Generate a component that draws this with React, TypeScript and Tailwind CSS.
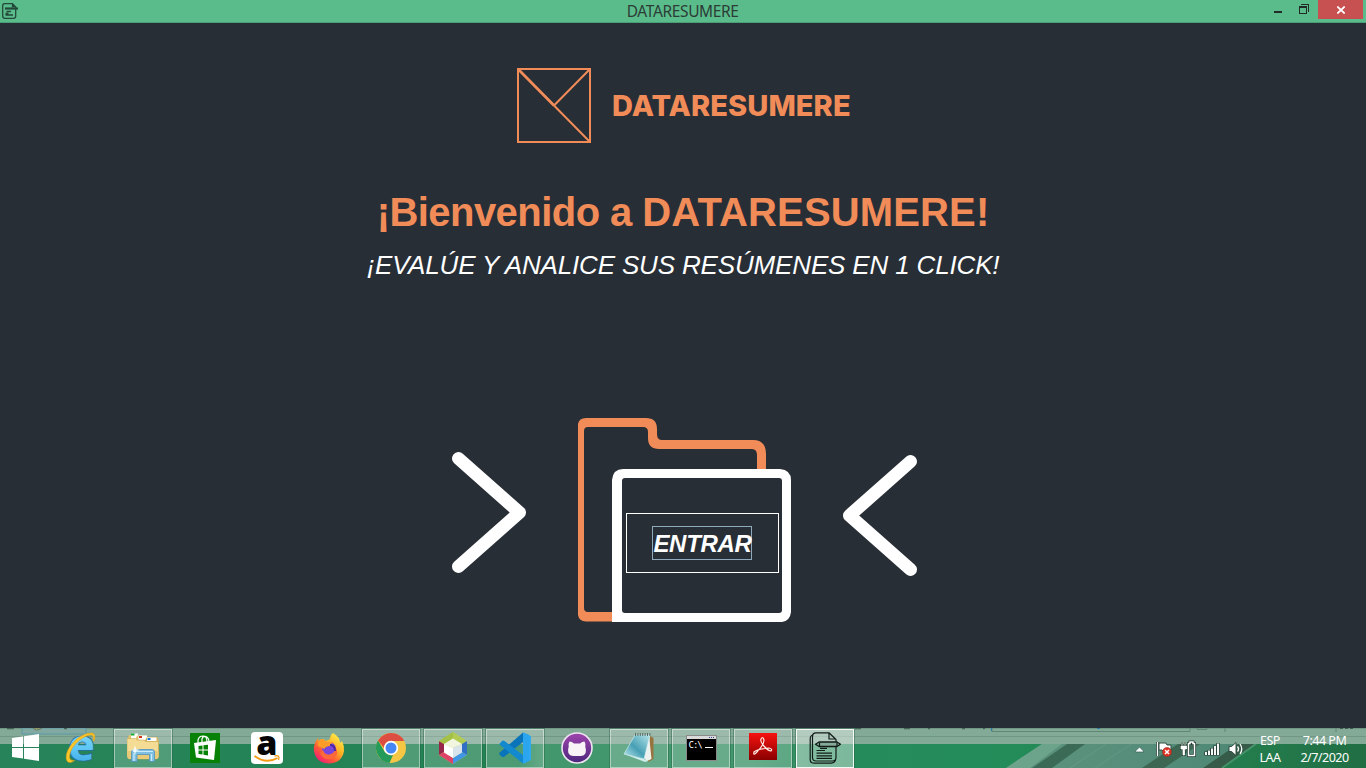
import type { ReactNode } from "react";

function NoteGlyph({ className }: { className: string }) {
  return (
    <svg className={className} viewBox="0 0 32 32" fill="none" stroke="#101a16" strokeWidth="1.2" strokeLinejoin="round">
      <path d="M4 3Q1.200 3.500 1.200 7V27.500Q1.200 31.200 5 31.200H22Q25.500 31 26.500 28" />
      <path d="M20 .8H7Q3.500.8 3.500 4.500V25.500Q3.500 29 7 29H23.500Q27 29 27 25.500V7.500L20 .8V7H26.500" />
      <path d="M6.500 12.200L10 10H28L31.500 12.200L28 14.500H10Z" fill="#86aa99" strokeWidth="1.300" />
      <path d="M10.500 10.500V14M28 10.500V14M11 16.300H18M7.500 18.500H16M7.500 21.200H23M7.500 23.800H23M7.500 26.400H23" strokeWidth="1.200" />
    </svg>
  );
}

function TitleGlyph() {
  return (
    <svg className="size-4" viewBox="0 0 16 16" fill="none" stroke="#23483a" strokeWidth="1.300">
      <path d="M10.500.7H2.500Q.7.7.7 3V13Q.7 15.300 3 15.300H11.500Q13.700 15.300 13.700 13V4L10.500.7V3.500H13.500" />
      <path d="M3 5.500H16" strokeWidth="2.200" />
      <path d="M4.500 8.500H9M3.500 10.500H6.500M3.500 12H11" strokeWidth="1.500" />
    </svg>
  );
}

function Icon({ children }: { children: ReactNode }) {
  return (
    <svg className="size-8" viewBox="0 0 32 32">
      {children}
    </svg>
  );
}

function Explorer() {
  return (
    <Icon>
      <path d="M1 6L2 3H9L10 6H14V26H2Q0 25 0 22Z" fill="#dfc06a" />
      <path d="M4 1.500H11V8H4Z" fill="#fff" />
      <path d="M4 1.500H7.500V3.500H4Z" fill="#12a82c" />
      <path d="M9 6L10 3.500H20L21 8V26H9Z" fill="#e3c671" />
      <path d="M11.500 3.500H20V8H11.500Z" fill="#fff" />
      <path d="M12 4H15V6H12Z" fill="#d9301c" />
      <path d="M18 8L20 5H30L31.500 7V24Q31 27 28 27H19Z" fill="#d8b75c" />
      <path d="M20 5.500H29.500V9H20Z" fill="#fff" />
      <path d="M20.500 6H23.500V8H20.500Z" fill="#1878d8" />
      <path d="M0 6.500H8.500L10.500 8H16.500L19 9.500H31.500V25Q31 27 29 27H2Q0 26 0 23Z" fill="#f4dc94" stroke="#c9a750" strokeWidth=".6" />
      <path d="M0 19H31.500V25Q31 27 29 27H2Q0 26 0 19Z" fill="#e9ca78" />
      <path d="M4.500 29.500V20Q4.500 17.500 7 17.500H25Q27.500 17.500 27.500 20V29.500H22.500V22.500H10V29.500Z" fill="#7fbfe2" stroke="#4f93bb" strokeWidth=".8" />
      <path d="M6 19.500H26M7 21V29M24.500 22V29" stroke="#c9ebfa" strokeWidth="1.200" />
      <path d="M8 13L9 17L13 18L9 19L8 23L7 19L4 18L7 17Z" fill="#fff" opacity=".9" />
    </Icon>
  );
}

function InternetExplorer() {
  return (
    <Icon>
      <defs>
        <linearGradient id="ie" x1="0" y1="0" x2="0" y2="1">
          <stop offset="0.2" stopColor="#8cdefb" />
          <stop offset=".6" stopColor="#5cc5f5" />
          <stop offset="1" stopColor="#2b97db" />
        </linearGradient>
      </defs>
      <text x="16.500" y="29" textAnchor="middle" className="font-['Open_Sans',sans-serif] text-[44px] font-extrabold" fill="url(#ie)" stroke="#22679a" strokeWidth=".7">
        e
      </text>
      <path
        d="M29 9Q31.500 2 27 1Q21 .5 13 6Q4 13 1.500 22Q0 31 5.500 30.500Q7.500 30 9.500 28.500Q4.500 29 4.500 24.500Q5 16 14 8.500Q22 2.500 26.500 3Q29 3.500 28 9Z"
        fill="#f9c62b"
        stroke="#dd9d12"
        strokeWidth=".6"
      />
    </Icon>
  );
}

function Store() {
  return (
    <Icon>
      <path d="M1 1H31V31H1Z" fill="#078207" />
      <path d="M9 12V8Q10 4 14 4Q18 4 18 10M13 11V7Q14 3.500 17 4.500Q20 6 20 10" fill="none" stroke="#fff" strokeWidth="1.200" />
      <path d="M5 11L27 8L25 28L7 25.500Z" fill="#fff" />
      <path d="M9.500 14L13.500 13.500V17.500H9.500ZM14.500 13.300L19 12.700V17.500H14.500ZM9.500 18.500H13.500V22.500L9.500 22ZM14.500 18.500H19V23.500L14.500 22.700Z" fill="#078207" />
    </Icon>
  );
}

function Amazon() {
  return (
    <Icon>
      <rect width="32" height="32" rx="4" fill="#fff" />
      <text x="15.800" y="22.500" textAnchor="middle" className="font-['Open_Sans',sans-serif] text-[34px] font-extrabold" fill="#050505">
        a
      </text>
      <path d="M3.500 24Q15 32.500 26.500 26" fill="none" stroke="#f59b13" strokeWidth="2" />
      <path d="M23.500 24Q29.500 22.500 27.500 28" fill="none" stroke="#f59b13" strokeWidth="1.300" />
    </Icon>
  );
}

function Firefox() {
  return (
    <Icon>
      <defs>
        <linearGradient id="fox" x1=".9" y1=".1" x2=".2" y2="1">
          <stop offset="0" stopColor="#fff04a" />
          <stop offset=".4" stopColor="#ffae24" />
          <stop offset=".7" stopColor="#ff543a" />
          <stop offset="1" stopColor="#ed1682" />
        </linearGradient>
      </defs>
      <path d="M20 1Q27 5 27 11L29 9Q31.500 14 31 19Q29 31 16 31.500Q3 31 1 19Q0 12 5 6L6 10Q8 7 11 7L12 9Q16 8 17 7Q17 3 20 1Z" fill="url(#fox)" />
      <circle cx="16" cy="17" r="7" fill="#7946dd" />
      <path d="M11 12Q15 8 21 11Q17 11 17 14Q13 14 11 17Q8 15 5 14Q4 9 8 7Q11 7 13 10Z" fill="#ff9c27" />
      <path d="M10 18Q12 24 18 22Q23 20 22 14Q27 22 21 26Q11 30 7 21Z" fill="#ff6838" />
      <path d="M17 13Q22 13 22 19" stroke="#4b2a9e" strokeWidth="2" fill="none" />
    </Icon>
  );
}

function Chrome() {
  return (
    <Icon>
      <circle cx="16" cy="16" r="15" fill="#f6c744" />
      <path d="M3 8.500L9.500 19.500Q13 24 18 23L14.500 31Q5 30 1.500 20Q0 13 3 8.500Z" fill="#249b59" />
      <path d="M3 8.500Q8 1 16 1Q25 1 29.300 9H16Q10 9 9 16Z" fill="#dc4e41" />
      <circle cx="16" cy="16" r="7.200" fill="#fff" />
      <circle cx="16" cy="16" r="5.500" fill="#4687f4" />
    </Icon>
  );
}

function NetBeans() {
  return (
    <Icon>
      <path d="M16 0L30 9V23L16 32L2 23V9Z" fill="#b2cb53" />
      <path d="M2 9L7 12V20L2 23Z" fill="#97264a" />
      <path d="M7 12L16 6L16 0L2 9Z" fill="#a3c047" />
      <path d="M30 9L25 12V20L30 23Z" fill="#306fc5" />
      <path d="M2 23L7 20L16 26V32Z" fill="#df4267" />
      <path d="M30 23L25 20L16 26V32Z" fill="#4095e4" />
      <path d="M7 12L16 6.500L25 12L16 16Z" fill="#f2f5df" />
      <path d="M7 12L16 16V26L7 20.500Z" fill="#fff" />
      <path d="M25 12L16 16V26L25 20.500Z" fill="#d9e3ec" />
    </Icon>
  );
}

function Code() {
  return (
    <Icon>
      <path d="M24 .5L.8 20.500Q-.3 21.700.8 23L3 24.800Q4.200 25.500 5.500 24.500L24 10Z" fill="#0a74ba" />
      <path d="M.8 11.500L3 9Q4.200 8 5.500 9L24 23V31.500L.8 12.800Q0 12 .8 11.500Z" fill="#1389cf" />
      <path d="M24 .5L31 3.500Q32 4 32 5V27Q32 28 31 28.500L24 31.700Q25 31 25 29V3Q25 1 24 .5Z" fill="#2daaf2" />
      <path d="M24 .3V31.700L30 29V3Z" fill="#2aa5ee" />
    </Icon>
  );
}

function GitHub() {
  return (
    <Icon>
      <defs>
        <linearGradient id="hub" x1="0" y1="0" x2="0" y2="1">
          <stop offset="0" stopColor="#9f45ad" />
          <stop offset="1" stopColor="#4b267c" />
        </linearGradient>
      </defs>
      <circle cx="16" cy="16" r="15" fill="url(#hub)" stroke="#eee5f1" strokeWidth="1.600" />
      <path d="M8.500 9.500Q11 9.500 13 11.500H19Q21 9.500 23.500 9.500Q25 12 24.300 14.500Q27 23.500 20 24H12Q5 23.500 7.700 14.500Q7 12 8.500 9.500Z" fill="#f7f3f6" />
    </Icon>
  );
}

function Notepad() {
  return (
    <Icon>
      <defs>
        <linearGradient id="pad" x1="0" y1="1" x2="1" y2="0">
          <stop offset="0" stopColor="#c4eef5" />
          <stop offset=".45" stopColor="#479fb4" />
          <stop offset="1" stopColor="#b4e4ea" />
        </linearGradient>
      </defs>
      <path d="M27 4L30.500 6V27L25 30Z" fill="#98733d" />
      <path d="M26 3L28.500 27L24 29L20 25Z" fill="#eef2ef" />
      <path d="M12 3L27 3L21 27L1 22Z" fill="url(#pad)" stroke="#d8f3f5" strokeWidth=".6" />
      <path d="M21 27L1 22L22 30L25 29Z" fill="#cfeeed" />
      <path d="M12 2.500H28" stroke="#566964" strokeWidth="3" strokeDasharray="1 1.400" />
    </Icon>
  );
}

function Acrobat() {
  return (
    <Icon>
      <defs>
        <linearGradient id="pdf" x1="0" y1="0" x2="0" y2="1">
          <stop offset="0" stopColor="#f71210" />
          <stop offset="1" stopColor="#890000" />
        </linearGradient>
      </defs>
      <path d="M2 1H30V28H2Z" fill="url(#pdf)" />
      <path d="M14 7Q16 4 17 8Q17 13 9 21Q6 24 7 20Q10 17 22 16Q26 17 24 19Q21 19 16 13Q13 9 14 7Z" fill="none" stroke="#ffe9e4" strokeWidth="1.200" />
    </Icon>
  );
}

function Terminal() {
  return (
    <span className="mb-px flex h-[26px] w-[31px] flex-col border border-[#8a8a8a] bg-black">
      <span className="flex h-[3px] shrink-0 justify-end gap-px bg-[#dadada] pt-px pr-0.5">
        <i className="h-px w-px bg-[#314d99]" />
        <i className="h-px w-px bg-[#314d99]" />
        <i className="h-px w-px bg-[#314d99]" />
      </span>
      <span className="flex items-start pt-px pl-[2px] font-['DejaVu_Sans_Mono',monospace] text-[9px] leading-[10px] tracking-[-1px] text-white">
        C:\<i className="mt-[7px] ml-[3px] h-px w-[8px] bg-white" />
      </span>
    </span>
  );
}

const open = "border-white/45 bg-white/20 outline outline-[#255f43]/40";

const tasks: { name: string; icon: ReactNode; frame: string }[] = [
  { name: "ie", icon: <InternetExplorer />, frame: "border-transparent" },
  { name: "files", icon: <Explorer />, frame: open },
  { name: "store", icon: <Store />, frame: "border-transparent" },
  { name: "amazon", icon: <Amazon />, frame: "border-transparent" },
  { name: "firefox", icon: <Firefox />, frame: "border-transparent" },
  { name: "chrome", icon: <Chrome />, frame: open },
  { name: "netbeans", icon: <NetBeans />, frame: open },
  { name: "code", icon: <Code />, frame: open },
  { name: "github", icon: <GitHub />, frame: "border-transparent" },
  { name: "notepad", icon: <Notepad />, frame: open },
  { name: "terminal", icon: <Terminal />, frame: open },
  { name: "acrobat", icon: <Acrobat />, frame: open },
  { name: "notes", icon: <NoteGlyph className="size-8" />, frame: "border-white/90 bg-white/40 outline outline-[#255f43]/40" },
];

function TaskbarBackdrop() {
  return (
    <svg className="absolute inset-0 -z-10 h-full w-full" viewBox="0 0 1366 40">
      <defs>
        <linearGradient id="glass">
          <stop offset="0" stopColor="#27845a" />
          <stop offset=".38" stopColor="#218352" />
          <stop offset=".4" stopColor="#43976d" />
          <stop offset=".55" stopColor="#41976d" />
          <stop offset=".62" stopColor="#258b5a" />
          <stop offset=".74" stopColor="#238c59" />
          <stop offset=".93" stopColor="#237a4b" />
          <stop offset="1" stopColor="#216e44" />
        </linearGradient>
        <linearGradient id="leaf">
          <stop offset="0" stopColor="#5d9480" />
          <stop offset="1" stopColor="#4d8773" />
        </linearGradient>
      </defs>
      <path d="M0 0H1366V40H0Z" fill="url(#glass)" />
      <path d="M1006 40L1042 16H1256L1220 40Z" fill="url(#leaf)" />
      <path d="M1006 40L1042 16H1062L1030 40Z" fill="#6ba48b" />
      <path d="M1032 40L1067 16H1085L1052 40Z" fill="#3b6b57" />
      <path d="M1142 40L1178 16H1200L1164 40Z" fill="#3d6653" />
      <path d="M1203 40L1238 16H1254L1224 40Z" fill="#365c49" />
      <path d="M1070 40L1106 16M1095 40L1131 16" stroke="#80a99a" opacity=".35" />
      <path d="M1222 40L1256 16" stroke="#449269" strokeWidth="2" />
      <path d="M0 0H1366V16H0Z" fill="#83a997" />
      <path d="M0 8.500H1366M0 .5H1366" stroke="#719784" />
      <path d="M22 0H86V6H22Z" fill="#82a9a1" stroke="#5a9aa6" />
      <path d="M33 0Q36 4 42 0Z" fill="#b4b47d" stroke="#637a60" />
      <path d="M7 .5H14M64 .5H67M855 .5H861M904 .5H910M928 .5H930M962 .5H965M983 .5H985" stroke="#456353" strokeWidth="1.500" />
      <path d="M992 0V3.500H1190V0M1197 0V1.500H1207V0M1225 0V4M1336 0V4" fill="none" stroke="#5f8774" />
      <path d="M1097 .5H1100M991.500 0V3" stroke="#287ca5" />
      <path d="M1340 .5H1355" stroke="#3f5a50" strokeDasharray="3 2" />
    </svg>
  );
}

function TrayIcons() {
  return (
    <svg className="h-10 w-[110px]" viewBox="1134 728 110 40" fill="none">
      <path d="M1135.500 751L1139.500 747L1143.500 751V752H1135.500Z" fill="#f5ffff" stroke="#405c50" strokeWidth=".7" />
      <path d="M1157.500 742V756" stroke="#263d34" strokeWidth="3" />
      <path d="M1157.500 742V756" stroke="#fff" strokeWidth="1.400" />
      <path d="M1159 743H1166L1167 745H1171V752H1164L1162 750H1159Z" fill="#fff" stroke="#314e42" />
      <circle cx="1167" cy="752" r="4.500" fill="#df3223" stroke="#922f21" strokeWidth=".6" />
      <path d="M1165 750L1169 754M1169 750L1165 754" stroke="#fff" strokeWidth="1.500" />
      <path d="M1182 742V745M1185 742V745M1181 746H1186.500V749H1184.500V755H1183V749H1181Z" fill="#fff" stroke="#243e33" strokeWidth="2" />
      <path d="M1182 742V745M1185 742V745M1181 746H1186.500V749H1184.500V755H1183V749H1181Z" fill="#fff" stroke="#fff" strokeWidth=".8" />
      <path d="M1188.500 743.500H1190V742H1193V743.500H1194.500V755.500H1188.500Z" stroke="#243e33" strokeWidth="3" />
      <path d="M1188.500 743.500H1190V742H1193V743.500H1194.500V755.500H1188.500Z" stroke="#fff" strokeWidth="1.500" />
      <path d="M1206 755.500V751.500M1209 755.500V750M1212 755.500V748M1215 755.500V745.500M1218 755.500V743" stroke="#263f34" strokeWidth="3.400" />
      <path d="M1206 755V752M1209 755V750.500M1212 755V748.500M1215 755V746M1218 755V743.500" stroke="#fff" strokeWidth="1.900" />
      <path d="M1229 746.500H1231.500L1236 742.500V755.500L1231.500 751.500H1229Z" fill="#fff" stroke="#304d40" />
      <path d="M1237.500 746.500Q1239.500 749 1237.500 751.500M1240 744Q1243.500 749 1240 754" stroke="#fff" strokeWidth="1.300" />
    </svg>
  );
}

function TitleBar() {
  return (
    <header className="flex h-[23px] items-start justify-between border-b border-[#4b9f77] bg-[#5bbc8b]">
      <div className="flex w-[110px] pt-[3px] pl-[2px]">
        <TitleGlyph />
      </div>
      <span className="scale-x-[0.97] font-['Noto_Sans',sans-serif] text-[16px] leading-[23px] tracking-[-0.4px] text-[#2b3d36]">DATARESUMERE</span>
      <div className="flex h-[19px] w-[110px] justify-end pr-[3px]">
        <svg className="h-[19px] w-[45px]" viewBox="1273 0 45 19" fill="none" shapeRendering="crispEdges">
          <path d="M1274 11H1282V13H1274Z" fill="#222b28" />
          <path d="M1301 4.500H1308.500V12" stroke="#222b28" />
          <path d="M1299.500 6.500H1306.500V13.500H1299.500ZM1299 7.500H1307" stroke="#222b28" />
        </svg>
        <div className="flex w-[45px] items-center justify-center bg-[#c75050] pl-px">
          <svg className="h-[8px] w-[8px]" viewBox="0 0 8 8" stroke="#fff" strokeWidth="1.800">
            <path d="M.3.5L7.700 7.500M7.700.5L.3 7.500" />
          </svg>
        </div>
      </div>
    </header>
  );
}

export default function App() {
  return (
    <div className="flex h-[768px] w-[1366px] flex-col overflow-hidden bg-[#282e36] font-['Liberation_Sans',sans-serif]">
      <TitleBar />
      <main className="flex h-[705px] flex-col">
        <div className="flex h-[120px] items-end pl-[517px]">
          <svg className="h-[75px] w-[74px]" viewBox="0 0 74 75" fill="none" stroke="#f18c59" strokeWidth="2">
            <path d="M1 1H73V74H1ZM1 1L73 74M37 37.500L73 1" />
            <path d="M1 1L37 37.500" strokeWidth="2.600" />
          </svg>
          <span className="ml-[21px] pb-[19px] font-[Inter,sans-serif] text-[29px] leading-[36px] font-extrabold tracking-[0.08px] whitespace-nowrap text-[#f18c59]">DATARESUMERE</span>
        </div>
        <h1 className="mt-[46px] text-center text-[40px] leading-[46px] font-bold whitespace-nowrap text-[#f18c59]">
          <span className="tracking-[-0.55px]">¡Bienvenido a </span><span className="tracking-[0.14px]">DATARESUMERE!</span>
        </h1>
        <p className="mt-[14px] text-center text-[26px] leading-[32px] tracking-[-0.16px] whitespace-nowrap text-white italic">¡EVALÚE Y ANALICE SUS RESÚMENES EN 1 CLICK!</p>
        <div className="mt-[137px] flex pl-[452px]">
          <svg className="mt-[34px] h-[122px] w-[75px]" viewBox="452 452 75 122" fill="none" stroke="#fff" strokeWidth="13" strokeLinecap="round" strokeLinejoin="round">
            <path d="M458.500 458.500L519.500 512.500L458.500 566.500" />
          </svg>
          <div className="relative ml-[50px] h-[206px] w-[216px]">
            <svg className="absolute inset-0 h-full w-full" viewBox="577 418 216 206" fill="none">
              <path d="M578 424Q579 418 586 418H646Q657 418 657 429V434Q657 440 662 440H753Q766 440 766 454V470H757V455Q757 449 752 449H659Q648 449 648 438V432Q648 427 643 427H588Q584 427 584 431V608Q584 612 588 612H613V621.500H586Q579 621 578 615Z" fill="#f18c59" />
              <path fillRule="evenodd" d="M612 480Q613 469 623 469H780Q791 470 791 480V612Q790 621 782 622H612ZM622 481V610Q622 613 625 613H779Q782 613 782 610V481Q782 478 779 478H625Q622 478 622 481Z" fill="#fff" />
            </svg>
            <button className="absolute top-[95px] left-[49px] flex h-[60px] w-[153px] items-center justify-center border border-white pr-px pb-px">
              <span className="flex h-[34px] w-[100px] items-center justify-center border border-[#8fa9bd] pt-[2px] pl-px text-[24px] leading-[32px] font-bold tracking-[-0.3px] text-white italic">ENTRAR</span>
            </button>
          </div>
          <svg className="mt-[37px] ml-[50px] h-[122px] w-[75px]" viewBox="843 455 75 122" fill="none" stroke="#fff" strokeWidth="13" strokeLinecap="round" strokeLinejoin="round">
            <path d="M910.500 461.500L849.500 515.500L910.500 569.500" />
          </svg>
        </div>
      </main>
      <footer className="relative isolate flex h-10 shrink-0 text-white">
        <TaskbarBackdrop />
        <div className="flex w-[50px] items-center pb-px pl-[12px]">
          <svg className="h-[27px] w-[27px]" viewBox="0 0 27 27" fill="#fff">
            <path d="M0 4L11 2.500V13H0ZM12 2.300L27 0V13H12ZM0 14H11V24.500L0 23ZM12 14H27V27L12 24.700Z" />
          </svg>
        </div>
        <nav className="flex">
          {tasks.map((task) => (
            <div key={task.name} className="w-[62px] pt-px">
              <div className={`mx-auto flex h-[39px] w-[58px] items-center justify-center border pb-px ${task.frame}`}>{task.icon}</div>
            </div>
          ))}
        </nav>
        <div className="ml-auto flex">
          <TrayIcons />
          <div className="flex w-[52px] flex-col items-center pt-[4px] font-['Noto_Sans',sans-serif] text-[12.5px] leading-[17px] tracking-[-0.5px]">
            <span>ESP</span>
            <span>LAA</span>
          </div>
          <div className="mr-[13px] flex w-[57px] flex-col items-center pt-[4px] font-['Noto_Sans',sans-serif] text-[12.5px] leading-[17px] tracking-[-0.5px] whitespace-nowrap">
            <span>7:44 PM</span>
            <span>2/7/2020</span>
          </div>
        </div>
      </footer>
    </div>
  );
}
